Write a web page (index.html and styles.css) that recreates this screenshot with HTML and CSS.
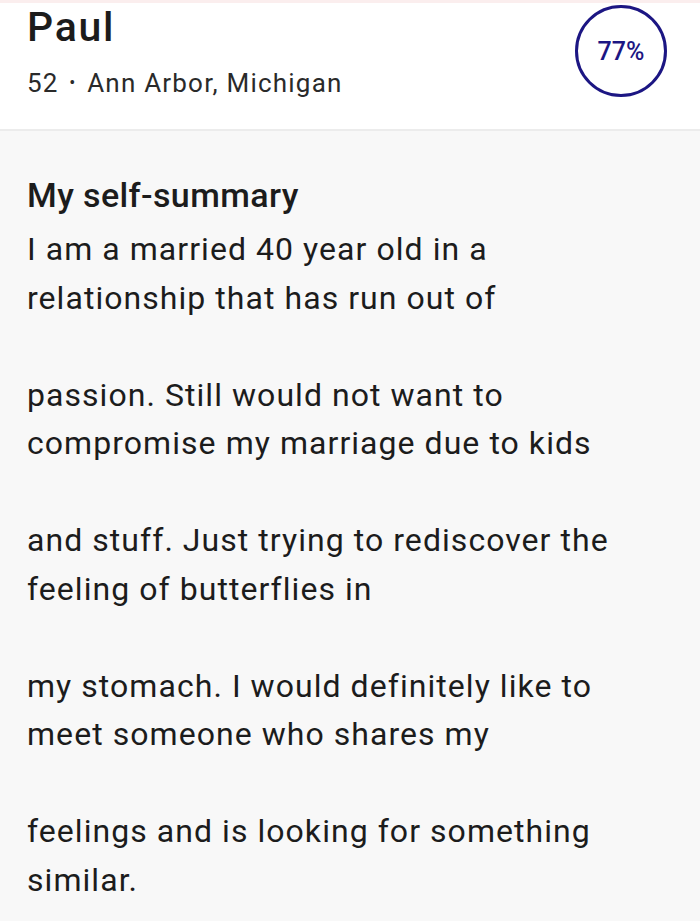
FILE: index.html
```html
<!DOCTYPE html>
<html>
<head>
<meta charset="utf-8">
<link rel="stylesheet" href="styles.css">
</head>
<body>
<div class="page">
  <header class="profile-head">
    <div class="who">
      <h1 class="name">Paul</h1>
      <div class="meta">52 <span class="dot">•</span> Ann Arbor, Michigan</div>
    </div>
    <div class="match">77%</div>
  </header>
  <section class="summary">
    <h2 class="title">My self-summary</h2>
    <p class="line">I am a married 40 year old in a</p>
    <p class="line">relationship that has run out of</p>
    <p class="line blank">&nbsp;</p>
    <p class="line">passion. Still would not want to</p>
    <p class="line">compromise my marriage due to kids</p>
    <p class="line blank">&nbsp;</p>
    <p class="line">and stuff. Just trying to rediscover the</p>
    <p class="line">feeling of butterflies in</p>
    <p class="line blank">&nbsp;</p>
    <p class="line">my stomach. I would definitely like to</p>
    <p class="line">meet someone who shares my</p>
    <p class="line blank">&nbsp;</p>
    <p class="line">feelings and is looking for something</p>
    <p class="line">similar.</p>
  </section>
</div>
</body>
</html>
```

FILE: styles.css
```css
html, body {
  margin: 0;
  padding: 0;
  background: #f8f8f8;
}
body {
  font-family: Roboto, "Liberation Sans", sans-serif;
  color: #1c1c1c;
}
.page {
  width: 700px;
  height: 921px;
  overflow: hidden;
  border-top: 3px solid #fbeeee;
  box-sizing: border-box;
}
.profile-head {
  background: #ffffff;
  height: 128px;
  box-sizing: border-box;
  border-bottom: 2px solid #ececec;
  display: flex;
  justify-content: space-between;
  padding: 0 33px 0 27px;
}
.name {
  margin: 0;
  font-size: 41px;
  font-weight: 500;
  line-height: 48px;
  letter-spacing: 1.7px;
}
.meta {
  font-size: 26px;
  line-height: 30px;
  margin-top: 17px;
  color: #2a2a2a;
  letter-spacing: 1.2px;
}
.dot {
  font-size: 18px;
  vertical-align: 3px;
  margin: 0 3px;
}
.match {
  width: 86px;
  height: 86px;
  border: 3px solid #1c1683;
  border-radius: 50%;
  margin-top: 2px;
  display: flex;
  align-items: center;
  justify-content: center;
  font-size: 25px;
  font-weight: 500;
  color: #1c1683;
}
.summary {
  padding: 44px 0 0 27px;
}
.title {
  margin: 0;
  font-size: 34px;
  font-weight: 500;
  line-height: 40px;
  letter-spacing: 0.4px;
}
.title + .line {
  margin-top: 10px;
}
.line {
  margin: 0;
  font-size: 32px;
  line-height: 48.5px;
  letter-spacing: 1.05px;
}
```
